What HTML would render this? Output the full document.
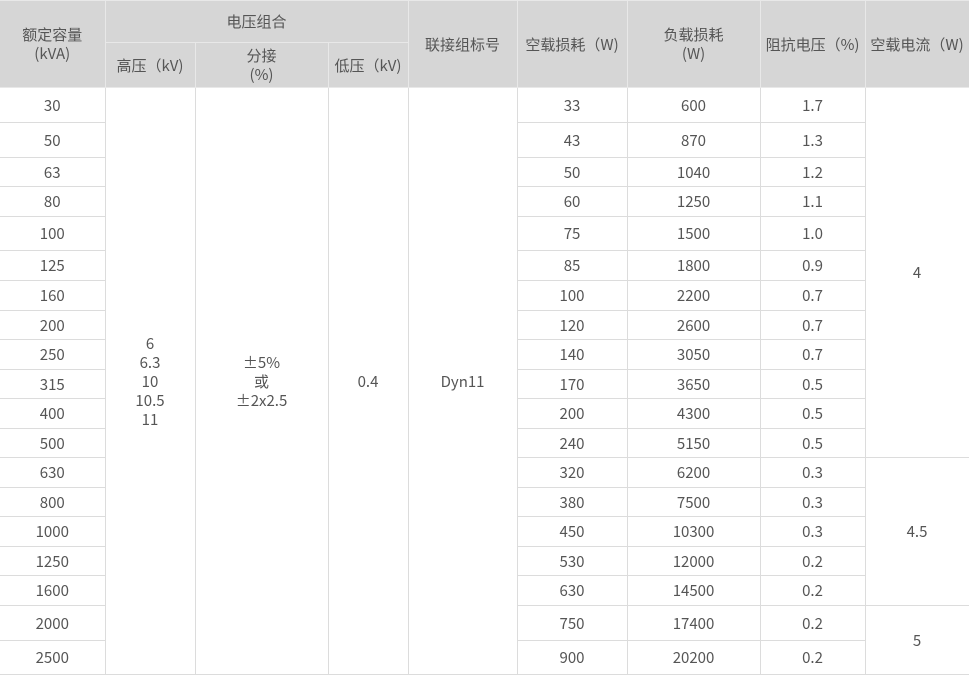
<!DOCTYPE html>
<html><head><meta charset="utf-8"><style>
html,body{margin:0;padding:0;background:#fff;}
table{border-collapse:collapse;table-layout:fixed;width:969px;font-family:"Noto Sans CJK SC","Liberation Sans",sans-serif;font-size:15px;color:#555;}
td,th{border:1px solid #dcdcdc;text-align:center;vertical-align:middle;padding:0;font-weight:normal;line-height:19px;overflow:hidden;}
th{background:#d6d6d6;border-color:#e8e8e8;}
tr > :first-child{border-left:none;}
</style></head><body>
<table>
<colgroup><col style="width:105px"><col style="width:90px"><col style="width:133px"><col style="width:80px"><col style="width:109px"><col style="width:110px"><col style="width:133px"><col style="width:105px"><col style="width:104px"></colgroup>
<tr style="height:42px"><th rowspan="2">额定容量<br>(kVA)</th><th colspan="3">电压组合</th><th rowspan="2">联接组标号</th><th rowspan="2">空载损耗（W)</th><th rowspan="2">负载损耗<br>(W)</th><th rowspan="2">阻抗电压（%)</th><th rowspan="2">空载电流（W)</th></tr>
<tr style="height:45px"><th style="border-left:1px solid #e8e8e8">高压（kV)</th><th>分接<br>(%)</th><th>低压（kV)</th></tr>
<tr style="height:35px"><td>30</td><td rowspan="19" style="border-left:1px solid #dcdcdc">6<br>6.3<br>10<br>10.5<br>11</td><td rowspan="19">±5%<br>或<br>±2x2.5</td><td rowspan="19">0.4</td><td rowspan="19">Dyn11</td><td>33</td><td>600</td><td>1.7</td><td rowspan="12">4</td></tr>
<tr style="height:35px"><td>50</td><td>43</td><td>870</td><td>1.3</td></tr>
<tr style="height:29px"><td>63</td><td>50</td><td>1040</td><td>1.2</td></tr>
<tr style="height:30px"><td>80</td><td>60</td><td>1250</td><td>1.1</td></tr>
<tr style="height:34px"><td>100</td><td>75</td><td>1500</td><td>1.0</td></tr>
<tr style="height:30px"><td>125</td><td>85</td><td>1800</td><td>0.9</td></tr>
<tr style="height:30px"><td>160</td><td>100</td><td>2200</td><td>0.7</td></tr>
<tr style="height:29px"><td>200</td><td>120</td><td>2600</td><td>0.7</td></tr>
<tr style="height:30px"><td>250</td><td>140</td><td>3050</td><td>0.7</td></tr>
<tr style="height:29px"><td>315</td><td>170</td><td>3650</td><td>0.5</td></tr>
<tr style="height:30px"><td>400</td><td>200</td><td>4300</td><td>0.5</td></tr>
<tr style="height:29px"><td>500</td><td>240</td><td>5150</td><td>0.5</td></tr>
<tr style="height:30px"><td>630</td><td>320</td><td>6200</td><td>0.3</td><td rowspan="5">4.5</td></tr>
<tr style="height:29px"><td>800</td><td>380</td><td>7500</td><td>0.3</td></tr>
<tr style="height:30px"><td>1000</td><td>450</td><td>10300</td><td>0.3</td></tr>
<tr style="height:29px"><td>1250</td><td>530</td><td>12000</td><td>0.2</td></tr>
<tr style="height:30px"><td>1600</td><td>630</td><td>14500</td><td>0.2</td></tr>
<tr style="height:35px"><td>2000</td><td>750</td><td>17400</td><td>0.2</td><td rowspan="2">5</td></tr>
<tr style="height:34px"><td>2500</td><td>900</td><td>20200</td><td>0.2</td></tr>
</table>
</body></html>
